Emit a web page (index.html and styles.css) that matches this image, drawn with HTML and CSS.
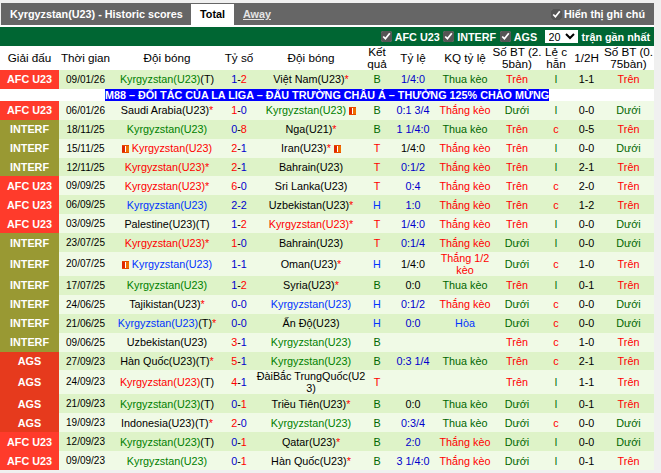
FILE: index.html
```html
<!DOCTYPE html>
<html lang="vi">
<head>
<meta charset="utf-8">
<title>Historic scores</title>
<link rel="stylesheet" href="styles.css">
</head>
<body>
<div class="wrap">
  <div class="titlebar">
    <span class="ttl">Kyrgyzstan(U23) - Historic scores</span>
    <span class="tab on">Total</span>
    <span class="tab off">Away</span>
    <label class="note"><input type="checkbox" checked>Hiển thị ghi chú</label>
  </div>
  <div class="filters">
    <label><input type="checkbox" checked>AFC U23</label>
    <label><input type="checkbox" checked>INTERF</label>
    <label><input type="checkbox" checked>AGS</label>
    <select><option>20</option></select>
    <span>trận gần nhất</span>
  </div>
  <table>
    <colgroup><col class="c1"><col class="c2"><col class="c3"><col class="c4"><col class="c5"><col class="c6"><col class="c7"><col class="c8"><col class="c9"><col class="c10"><col class="c11"><col class="c12"></colgroup>
    <thead><tr class="hd"><th>Giải đấu</th><th>Thời gian</th><th>Đội bóng</th><th>Tỷ số</th><th>Đội bóng</th><th>Kết quả</th><th>Tỷ lệ</th><th>KQ tỷ lệ</th><th>Số BT (2. 5bàn)</th><th>Lẻ c hẵn</th><th>1/2H</th><th>Số BT (0. 75bàn)</th></tr></thead>
    <tbody>
      <tr class="a r"><td class="l afc">AFC U23</td><td class="d">09/01/26</td><td><span class="tg">Kyrgyzstan(U23)</span>(T)</td><td><b>1</b>-<i>2</i></td><td>Việt Nam(U23)<i>*</i></td><td class="g">B</td><td class="b">1/4:0</td><td class="g">Thua kèo</td><td class="x">Trên</td><td class="g">l</td><td>1-1</td><td class="x">Trên</td></tr>
      <tr class="ad"><td colspan="12"><span>M88 – ĐỐI TÁC CỦA LA LIGA – ĐẤU TRƯỜNG CHÂU Á – THƯỞNG 125% CHÀO MỪNG</span></td></tr>
      <tr class="b2 r"><td class="l afc">AFC U23</td><td class="d">06/01/26</td><td>Saudi Arabia(U23)<i>*</i></td><td><i>1</i>-<b>0</b></td><td><span class="tg">Kyrgyzstan(U23)</span> <em class="card"></em></td><td class="g">B</td><td class="b">0:1 3/4</td><td class="x">Thắng kèo</td><td class="g">Dưới</td><td class="g">l</td><td>0-0</td><td class="g">Dưới</td></tr>
      <tr class="a r"><td class="l inf">INTERF</td><td class="d">18/11/25</td><td class="tg">Kyrgyzstan(U23)</td><td><b>0</b>-<i>8</i></td><td>Nga(U21)<i>*</i></td><td class="g">B</td><td class="b">1 1/4:0</td><td class="g">Thua kèo</td><td class="x">Trên</td><td class="x">c</td><td>0-5</td><td class="x">Trên</td></tr>
      <tr class="b2 r"><td class="l inf">INTERF</td><td class="d">15/11/25</td><td class="x"><em class="card"></em> Kyrgyzstan(U23)</td><td><i>2</i>-<b>1</b></td><td>Iran(U23)<i>*</i> <em class="card"></em></td><td class="x">T</td><td>1/4:0</td><td class="x">Thắng kèo</td><td class="x">Trên</td><td class="g">l</td><td>0-0</td><td class="g">Dưới</td></tr>
      <tr class="a r"><td class="l inf">INTERF</td><td class="d">12/11/25</td><td class="x">Kyrgyzstan(U23)*</td><td><i>2</i>-<b>1</b></td><td>Bahrain(U23)</td><td class="x">T</td><td class="b">0:1/2</td><td class="x">Thắng kèo</td><td class="x">Trên</td><td class="g">l</td><td>2-1</td><td class="x">Trên</td></tr>
      <tr class="b2 r"><td class="l afc">AFC U23</td><td class="d">09/09/25</td><td class="x">Kyrgyzstan(U23)*</td><td><i>6</i>-<b>0</b></td><td>Sri Lanka(U23)</td><td class="x">T</td><td class="b">0:4</td><td class="x">Thắng kèo</td><td class="x">Trên</td><td class="x">c</td><td>2-0</td><td class="x">Trên</td></tr>
      <tr class="a r"><td class="l afc">AFC U23</td><td class="d">06/09/25</td><td class="tb">Kyrgyzstan(U23)</td><td><b>2-2</b></td><td>Uzbekistan(U23)<i>*</i></td><td class="tb">H</td><td class="b">1:0</td><td class="x">Thắng kèo</td><td class="x">Trên</td><td class="x">c</td><td>1-2</td><td class="x">Trên</td></tr>
      <tr class="b2 r"><td class="l afc">AFC U23</td><td class="d">03/09/25</td><td>Palestine(U23)(T)</td><td><b>1</b>-<i>2</i></td><td class="x">Kyrgyzstan(U23)*</td><td class="x">T</td><td class="b">1/4:0</td><td class="x">Thắng kèo</td><td class="x">Trên</td><td class="g">l</td><td>0-0</td><td class="g">Dưới</td></tr>
      <tr class="a r"><td class="l inf">INTERF</td><td class="d">23/07/25</td><td class="x">Kyrgyzstan(U23)*</td><td><i>1</i>-<b>0</b></td><td>Bahrain(U23)</td><td class="x">T</td><td class="b">0:1/4</td><td class="x">Thắng kèo</td><td class="g">Dưới</td><td class="g">l</td><td>0-0</td><td class="g">Dưới</td></tr>
      <tr class="b2 tall"><td class="l inf">INTERF</td><td class="d">20/07/25</td><td class="tb"><em class="card"></em> Kyrgyzstan(U23)</td><td><b>1-1</b></td><td>Oman(U23)<i>*</i></td><td class="tb">H</td><td>1/4:0</td><td class="x">Thắng 1/2 kèo</td><td class="g">Dưới</td><td class="x">c</td><td>1-0</td><td class="x">Trên</td></tr>
      <tr class="a r"><td class="l inf">INTERF</td><td class="d">17/07/25</td><td class="tg">Kyrgyzstan(U23)</td><td><b>1</b>-<i>2</i></td><td>Syria(U23)<i>*</i></td><td class="g">B</td><td>0:0</td><td class="g">Thua kèo</td><td class="x">Trên</td><td class="g">l</td><td>0-1</td><td class="x">Trên</td></tr>
      <tr class="b2 r"><td class="l inf">INTERF</td><td class="d">24/06/25</td><td>Tajikistan(U23)<i>*</i></td><td><b>0-0</b></td><td class="tb">Kyrgyzstan(U23)</td><td class="tb">H</td><td class="b">0:1/2</td><td class="x">Thắng kèo</td><td class="g">Dưới</td><td class="x">c</td><td>0-0</td><td class="g">Dưới</td></tr>
      <tr class="a r"><td class="l inf">INTERF</td><td class="d">21/06/25</td><td><span class="tb">Kyrgyzstan(U23)</span>(T)<i>*</i></td><td><b>0-0</b></td><td>Ấn Độ(U23)</td><td class="tb">H</td><td class="b">0:0</td><td class="tb">Hòa</td><td class="g">Dưới</td><td class="x">c</td><td>0-0</td><td class="g">Dưới</td></tr>
      <tr class="b2 r"><td class="l inf">INTERF</td><td class="d">09/06/25</td><td>Uzbekistan(U23)</td><td><i>3</i>-<b>1</b></td><td class="tg">Kyrgyzstan(U23)</td><td class="g">B</td><td></td><td></td><td class="x">Trên</td><td class="x">c</td><td>1-0</td><td class="x">Trên</td></tr>
      <tr class="a r"><td class="l ags">AGS</td><td class="d">27/09/23</td><td>Hàn Quốc(U23)(T)<i>*</i></td><td><i>5</i>-<b>1</b></td><td class="tg">Kyrgyzstan(U23)</td><td class="g">B</td><td class="b">0:3 1/4</td><td class="g">Thua kèo</td><td class="x">Trên</td><td class="x">c</td><td>2-1</td><td class="x">Trên</td></tr>
      <tr class="b2 tall"><td class="l ags">AGS</td><td class="d">24/09/23</td><td><span class="x">Kyrgyzstan(U23)</span>(T)</td><td><i>4</i>-<b>1</b></td><td class="brk">ĐàiBắc TrungQuốc(U23)</td><td class="x">T</td><td></td><td></td><td class="x">Trên</td><td class="g">l</td><td>1-1</td><td class="x">Trên</td></tr>
      <tr class="a r"><td class="l ags">AGS</td><td class="d">21/09/23</td><td><span class="tg">Kyrgyzstan(U23)</span>(T)</td><td><b>0</b>-<i>1</i></td><td>Triều Tiên(U23)<i>*</i></td><td class="g">B</td><td>0:0</td><td class="g">Thua kèo</td><td class="g">Dưới</td><td class="g">l</td><td>0-1</td><td class="x">Trên</td></tr>
      <tr class="b2 r"><td class="l ags">AGS</td><td class="d">19/09/23</td><td>Indonesia(U23)(T)<i>*</i></td><td><i>2</i>-<b>0</b></td><td class="tg">Kyrgyzstan(U23)</td><td class="g">B</td><td class="b">0:3/4</td><td class="g">Thua kèo</td><td class="g">Dưới</td><td class="x">c</td><td>0-0</td><td class="g">Dưới</td></tr>
      <tr class="a r"><td class="l afc">AFC U23</td><td class="d">12/09/23</td><td><span class="tg">Kyrgyzstan(U23)</span>(T)</td><td><b>0</b>-<i>1</i></td><td>Qatar(U23)<i>*</i></td><td class="g">B</td><td class="b">2:0</td><td class="x">Thắng kèo</td><td class="g">Dưới</td><td class="g">l</td><td>0-0</td><td class="g">Dưới</td></tr>
      <tr class="b2 r"><td class="l afc">AFC U23</td><td class="d">09/09/23</td><td class="tg">Kyrgyzstan(U23)</td><td><b>0</b>-<i>1</i></td><td>Hàn Quốc(U23)<i>*</i></td><td class="g">B</td><td class="b">3 1/4:0</td><td class="x">Thắng kèo</td><td class="g">Dưới</td><td class="g">l</td><td>0-1</td><td class="x">Trên</td></tr>
    </tbody>
  </table>
</div>
</body>
</html>
```
FILE: styles.css
```css
* { box-sizing: border-box; }
html, body { margin: 0; padding: 0; }
body { width: 661px; height: 473px; overflow: hidden; background: #f0f0f0; font-family: "Liberation Sans", Arial, sans-serif; font-size: 10.8px; color: #000; }
.wrap { width: 654px; padding-top: 3px; background: #f0f0f0; }
.titlebar { height: 22px; margin-left: 1px; background: #666; color: #fff; font-weight: 700; display: flex; align-items: center; padding-left: 9px; }
.ttl { width: 181px; }
.tab { height: 21px; line-height: 21px; margin-top: 1px; text-align: center; }
.tab.on { background: #fff; color: #000; width: 43px; }
.tab.off { color: #e4e4e4; text-decoration: underline; margin-left: 9px; }
.note { margin-left: auto; display: flex; align-items: center; padding-right: 9px; }
input[type=checkbox] { width: 11px; height: 11px; margin: 0 2px 0 0; accent-color: #555; }
.filters { height: 19px; margin-top: 2px; background: #006633; color: #fff; font-weight: 700; display: flex; align-items: center; justify-content: flex-end; padding-right: 4px; box-shadow: 0 -2px 0 #fff; }
.filters label { display: flex; align-items: center; margin-right: 3.5px; }
.filters input[type=checkbox] { margin-right: 3px; }
.filters select { width: 33px; height: 13px; margin: 0 4px 0 4px; padding: 0; font: 10.8px "Liberation Sans", Arial, sans-serif; background: #fff; border: 0; border-radius: 0; }
table { width: 654px; border-collapse: collapse; table-layout: fixed; font-size: 10.8px; }
th, td { padding: 0; text-align: center; overflow: hidden; }
.c1 { width: 59px; } .c2 { width: 53px; } .c3 { width: 110px; } .c4 { width: 34px; } .c5 { width: 110px; } .c6 { width: 22px; } .c7 { width: 50px; } .c8 { width: 54px; } .c9 { width: 50px; } .c10 { width: 28px; } .c11 { width: 33px; } .c12 { width: 51px; }
.hd { height: 24px; background: #fff; }
.hd th { font-weight: 400; font-size: 11.7px; line-height: 12px; }
.r { height: 18.9px; }
.tall { height: 24px; line-height: 12px; }
.a { background: #def3c8; }
.b2 { background: #f0fae6; }
.ad { height: 12px; background: #fff; }
.ad td { line-height: 12px; font-weight: 700; }
.ad span { display: inline-block; background: #0000ff; color: #fff; white-space: nowrap; vertical-align: top; }
.l { color: #fff; font-weight: 700; }
.afc { background: #ff3b2b; }
.inf { background: #999933; }
.ags { background: #e63a1d; }
.d { font-size: 10px; }
.g { color: #006600; }
.tg { color: #008000; }
.b { color: #0000cc; }
.tb { color: #0033ff; }
.x { color: #ff0000; }
.brk { word-break: break-all; }
td i { font-style: normal; color: #ff0000; }
td b { font-weight: 400; color: #0000cc; }
.card { display: inline-block; width: 7px; height: 8px; background: linear-gradient(90deg, #e02800 0 3px, #fff 3px 4px, #f07000 4px); border-top: 1px solid #e84800; border-bottom: 1px solid #e84800; vertical-align: -1px; }
```
